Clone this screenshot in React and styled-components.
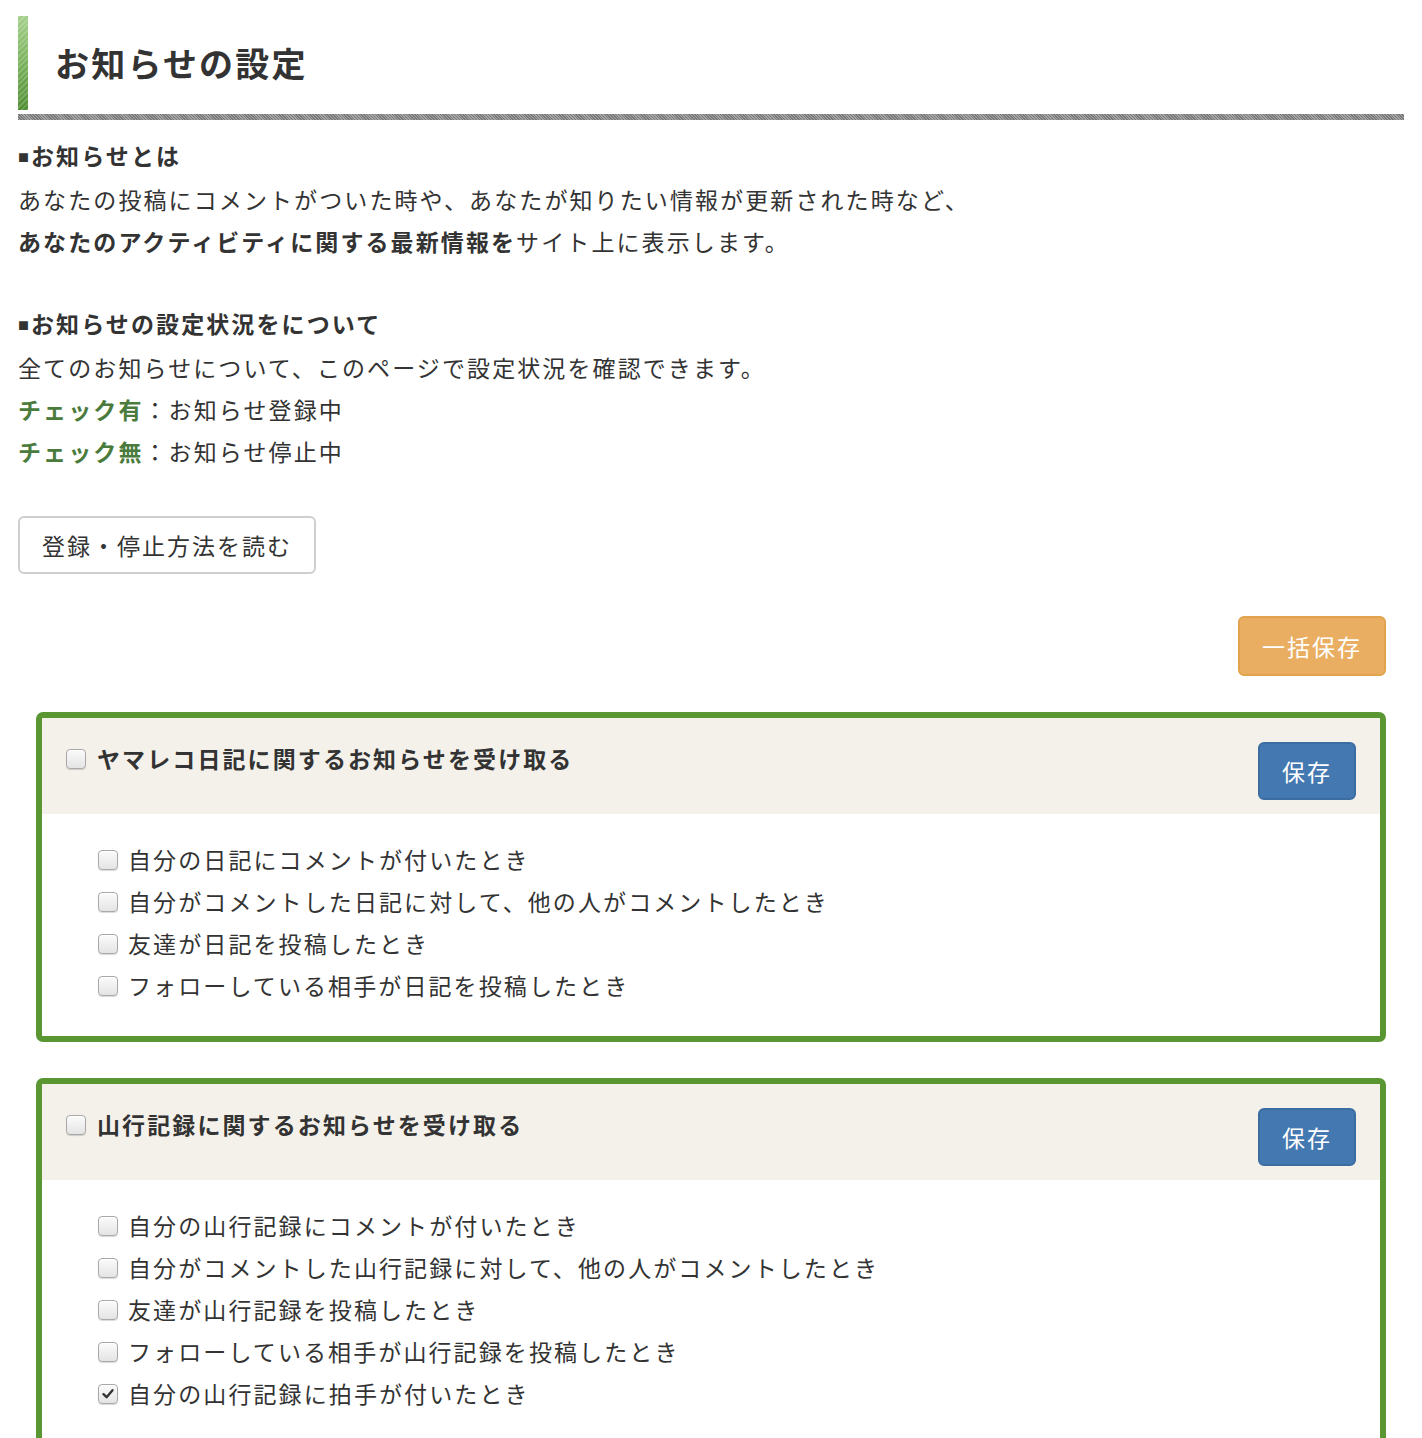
import React from 'react'
import styled, { createGlobalStyle } from 'styled-components'

const GlobalStyle = createGlobalStyle`
  html, body {
    margin: 0;
    padding: 0;
    background: #fff;
  }
  body {
    font-family: "Noto Sans CJK JP", "Noto Sans", sans-serif;
    color: #333;
  }
`

const groups = [
  {
    id: 'diary',
    title: 'ヤマレコ日記に関するお知らせを受け取る',
    items: [
      { label: '自分の日記にコメントが付いたとき', checked: false },
      { label: '自分がコメントした日記に対して、他の人がコメントしたとき', checked: false },
      { label: '友達が日記を投稿したとき', checked: false },
      { label: 'フォローしている相手が日記を投稿したとき', checked: false }
    ]
  },
  {
    id: 'record',
    title: '山行記録に関するお知らせを受け取る',
    items: [
      { label: '自分の山行記録にコメントが付いたとき', checked: false },
      { label: '自分がコメントした山行記録に対して、他の人がコメントしたとき', checked: false },
      { label: '友達が山行記録を投稿したとき', checked: false },
      { label: 'フォローしている相手が山行記録を投稿したとき', checked: false },
      { label: '自分の山行記録に拍手が付いたとき', checked: true }
    ]
  }
]

function CheckBox({ checked }) {
  return (
    <Box>
      {checked && (
        <svg width="14" height="14" viewBox="0 0 14 14">
          <path d="M2.5 7.2 L5.6 10.2 L11.5 3.2" fill="none" stroke="#333" strokeWidth="2.4" strokeLinecap="round" strokeLinejoin="round" />
        </svg>
      )}
    </Box>
  )
}

export default function App() {
  return (
    <Page>
      <GlobalStyle />
      <Heading>
        <HeadingTitle>お知らせの設定</HeadingTitle>
      </Heading>

      <Info>
        <Block>
          <Strong><Mark>■</Mark>お知らせとは</Strong>
          <p>あなたの投稿にコメントがついた時や、あなたが知りたい情報が更新された時など、</p>
          <p><Strong as="span">あなたのアクティビティに関する最新情報を</Strong>サイト上に表示します。</p>
        </Block>
        <Block>
          <Strong><Mark>■</Mark>お知らせの設定状況をについて</Strong>
          <p>全てのお知らせについて、このページで設定状況を確認できます。</p>
          <p><Green>チェック有</Green>：お知らせ登録中</p>
          <p><Green>チェック無</Green>：お知らせ停止中</p>
        </Block>
      </Info>

      <LinkButton>登録・停止方法を読む</LinkButton>

      <BulkRow>
        <Button $variant="warning">一括保存</Button>
      </BulkRow>

      {groups.map(group => (
        <Panel key={group.id}>
          <PanelHeading>
            <PanelTitle>
              <CheckBox />
              {group.title}
            </PanelTitle>
            <Button $variant="primary">保存</Button>
          </PanelHeading>
          <PanelBody>
            {group.items.map(item => (
              <Item key={item.label}>
                <CheckBox checked={item.checked} />
                {item.label}
              </Item>
            ))}
          </PanelBody>
        </Panel>
      ))}
    </Page>
  )
}

const Page = styled.div`
  padding: 16px 18px 40px;
  font-size: 23px;
  letter-spacing: 2.1px;
  color: #333;
`

const Heading = styled.div`
  padding-bottom: 10px;
  background-image: repeating-linear-gradient(
    45deg,
    #7a7a7a 0px,
    #7a7a7a 1px,
    #a4a4a4 1px,
    #a4a4a4 2px
  );
  background-size: 100% 6px;
  background-position: left bottom;
  background-repeat: no-repeat;
`

const HeadingTitle = styled.h1`
  margin: 0;
  height: 94px;
  line-height: 94px;
  padding-left: 37px;
  font-size: 34px;
  font-weight: 700;
  letter-spacing: 2.2px;
  color: #333;
  background-image:
    repeating-linear-gradient(135deg, rgba(255, 255, 255, 0.18) 0 2px, rgba(255, 255, 255, 0) 2px 4px),
    linear-gradient(180deg, #a3cf8a 0%, #78b15a 50%, #4f8e33 100%);
  background-size: 10px 100%;
  background-repeat: no-repeat;
  background-position: left top;
`

const Info = styled.div`
  margin-top: 14px;
  line-height: 42px;
  p {
    margin: 0;
  }
`

const Block = styled.div`
  & + & {
    margin-top: 40px;
  }
`

const Strong = styled.div`
  font-weight: 700;
`

const Mark = styled.span`
  font-size: 11px;
  letter-spacing: 2px;
  vertical-align: 3px;
`

const Green = styled.span`
  color: #4a7b3c;
  font-weight: 700;
`

const LinkButton = styled.button`
  display: block;
  margin-top: 44px;
  height: 58px;
  padding: 0 22px;
  border: 2px solid #cfcfcf;
  border-radius: 6px;
  background: #fff;
  font-family: inherit;
  font-size: 23px;
  letter-spacing: 2px;
  color: #333;
  cursor: pointer;
`

const BulkRow = styled.div`
  display: flex;
  justify-content: flex-end;
  margin-top: 42px;
  padding-right: 18px;
  button {
    height: 60px;
    padding: 0 22px;
  }
`

const Button = styled.button`
  height: 58px;
  padding: 0 22px;
  border-radius: 6px;
  border: 2px solid ${({ $variant }) => ($variant === 'warning' ? '#e2a34e' : '#3c6da2')};
  background: ${({ $variant }) => ($variant === 'warning' ? '#e9ae61' : '#4478b0')};
  color: #fff;
  font-family: inherit;
  font-size: 23px;
  letter-spacing: 2px;
  cursor: pointer;
  flex-shrink: 0;
`

const Panel = styled.section`
  margin: 36px 18px 0;
  border: 6px solid #5a9632;
  border-radius: 7px;
  overflow: hidden;
`

const PanelHeading = styled.div`
  display: flex;
  justify-content: space-between;
  align-items: flex-start;
  padding: 24px 24px 14px 24px;
  background: #f4f1eb;
`

const PanelTitle = styled.div`
  display: flex;
  align-items: center;
  gap: 11px;
  line-height: 32px;
  font-weight: 700;
`

const PanelBody = styled.div`
  padding: 24px 24px 30px 56px;
  background: #fff;
`

const Item = styled.label`
  display: flex;
  align-items: center;
  gap: 10px;
  height: 42px;
`

const Box = styled.span`
  display: inline-flex;
  align-items: center;
  justify-content: center;
  width: 18px;
  height: 18px;
  flex-shrink: 0;
  border: 1px solid #a9a9a9;
  border-radius: 4px;
  background: linear-gradient(180deg, #fbfbfb 0%, #e4e4e4 100%);
  box-shadow: inset 0 1px 0 #fff, 0 1px 1px rgba(0, 0, 0, 0.15);
  margin-top: 2px;
`
